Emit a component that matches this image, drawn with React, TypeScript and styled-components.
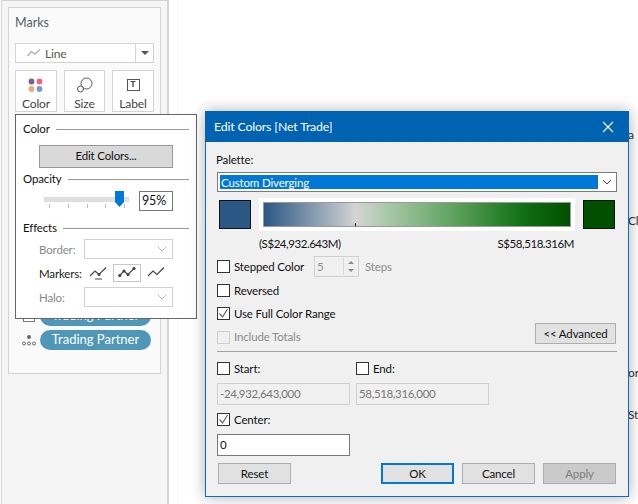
import React from "react";
import styled, { createGlobalStyle } from "styled-components";

const FONT = `"Lato", "Open Sans", "Liberation Sans", sans-serif`;

const Global = createGlobalStyle`
  html, body { margin: 0; padding: 0; background: #fff; }
  #root { width: 638px; height: 504px; }
  * { box-sizing: border-box; }
`;

const Page = styled.div`
  position: relative;
  width: 638px;
  height: 504px;
  overflow: hidden;
  display: flex;
  background: #fff;
  font-family: ${FONT};
  font-size: 11.5px;
  letter-spacing: -0.15px;
  color: #1a1a1a;
`;

const Sidebar = styled.aside`
  width: 169px;
  height: 504px;
  margin-left: 1px;
  padding: 7px 6px 0 6px;
  background: #f5f5f5;
  border-left: 1px solid #d4d4d4;
  border-right: 2px solid #d4d4d4;
  border-top: 1px solid #d4d4d4;
`;

const Worksheet = styled.main`
  flex: 1;
  margin-left: 8px;
  border-left: 1px solid #f4f4f4;
  display: flex;
  flex-direction: column;
  align-items: flex-start;
  padding: 127px 0 0 450px;
  font-size: 12px;
  color: #333;
  white-space: nowrap;
`;

const Stray = styled.span<{ $gap: number }>`
  display: block;
  height: 16px;
  line-height: 16px;
  margin-top: ${(p) => p.$gap}px;
`;

const MarksCard = styled.section`
  width: 153px;
  height: 367px;
  margin-top: -1px;
  padding: 7px 6px 0 6px;
  background: #fafafa;
  border: 1px solid #d4d4d4;
`;

const MarksTitle = styled.div`
  height: 16px;
  line-height: 16px;
  font-size: 12.5px;
  letter-spacing: 0;
  color: #55606e;
`;

const MarkType = styled.div`
  margin-top: 12px;
  height: 20px;
  width: 139px;
  display: flex;
  align-items: center;
  background: #fff;
  border: 1px solid #d4d4d4;
  color: #555;
  font-size: 12px;
`;

const MarkTypeLabel = styled.div`
  flex: 1;
  display: flex;
  align-items: center;
  gap: 4px;
  padding-left: 11px;
`;

const MarkTypeArrow = styled.div`
  width: 18px;
  height: 100%;
  border-left: 1px solid #d4d4d4;
  display: flex;
  align-items: center;
  justify-content: center;
  &::after {
    content: "";
    border-left: 4px solid transparent;
    border-right: 4px solid transparent;
    border-top: 4px solid #555;
  }
`;

const MarkButtons = styled.div`
  margin-top: 7px;
  display: flex;
  gap: 7px;
  width: 139px;
`;

const MarkButton = styled.div<{ $w: number }>`
  width: ${(p) => p.$w}px;
  height: 42px;
  background: #fff;
  border: 1px solid #d4d4d4;
  display: flex;
  flex-direction: column;
  align-items: center;
  color: #444;
  font-size: 12px;
`;

const MarkIconSlot = styled.div`
  height: 24px;
  display: flex;
  align-items: center;
  justify-content: center;
  margin-top: 2px;
`;

const MarkText = styled.div`
  line-height: 14px;
`;

const LabelGlyph = styled.span`
  width: 13px;
  height: 12px;
  border: 1px solid #555;
  display: flex;
  align-items: center;
  justify-content: center;
  font-family: "Liberation Mono", monospace;
  font-weight: 700;
  font-size: 9px;
  line-height: 1;
  color: #444;
`;

const PillList = styled.div`
  margin-top: 194px;
  display: flex;
  flex-direction: column;
  gap: 4px;
`;

const PillRow = styled.div`
  display: flex;
  align-items: center;
  gap: 4px;
`;

const PillIconSlot = styled.div`
  width: 14px;
  height: 14px;
  margin-left: 7px;
  display: flex;
  align-items: center;
  justify-content: center;
`;

const Pill = styled.div`
  width: 111px;
  height: 20px;
  border-radius: 10px;
  background: #4f97b6;
  color: #fff;
  font-size: 13px;
  letter-spacing: 0;
  line-height: 19px;
  text-align: center;
`;

/* Popover */
const Popover = styled.div`
  position: absolute;
  left: 15px;
  top: 114px;
  width: 182px;
  height: 205px;
  background: #fff;
  border: 1px solid #666;
  padding: 6px 7px 0 7px;
  color: #111;
`;

const GroupHead = styled.div`
  display: flex;
  align-items: center;
  gap: 6px;
  height: 16px;
  line-height: 16px;
  &::after {
    content: "";
    flex: 1;
    height: 1px;
    background: #999;
  }
`;

const EditColors = styled.div`
  width: 134px;
  height: 23px;
  margin: 8px 0 0 16px;
  background: #d9d9d9;
  border: 1px solid #999;
  text-align: center;
  line-height: 20px;
`;

const OpacityHead = styled(GroupHead)`
  margin-top: 3px;
`;

const OpacityRow = styled.div`
  position: relative;
  margin-top: 4px;
  height: 20px;
  display: flex;
  justify-content: flex-end;
  padding-right: 16px;
`;

const SliderTrack = styled.div`
  position: absolute;
  left: 21px;
  top: 6px;
  width: 85px;
  height: 5px;
  background: #e0e0e0;
  border: 1px solid #dcdcdc;
`;

const SliderTicks = styled.div`
  position: absolute;
  left: 26px;
  top: 13px;
  width: 76px;
  height: 4px;
  display: flex;
  justify-content: space-between;
  & > i {
    width: 1px;
    height: 4px;
    background: #bbb;
  }
`;

const SliderThumb = styled.svg`
  position: absolute;
  left: 92px;
  top: 0;
`;

const PercentBox = styled.div`
  width: 34px;
  height: 20px;
  border: 1px solid #777;
  padding-left: 2px;
  line-height: 18px;
  font-size: 12.5px;
`;

const EffectsHead = styled(GroupHead)`
  margin-top: 9px;
`;

const EffectRow = styled.div<{ $gap: number }>`
  display: flex;
  align-items: center;
  height: 20px;
  margin-top: ${(p) => p.$gap}px;
  padding-left: 16px;
`;

const EffectLabel = styled.div<{ $off?: boolean }>`
  width: 45px;
  color: ${(p) => (p.$off ? "#8a8a8a" : "#222")};
`;

const EffectSelect = styled.div`
  width: 89px;
  height: 20px;
  border: 1px solid #d0d0d0;
  display: flex;
  align-items: center;
  justify-content: flex-end;
  padding-right: 5px;
`;

const MarkerChoices = styled.div`
  display: flex;
  align-items: center;
  gap: 1px;
`;

const MarkerChoice = styled.div<{ $on?: boolean }>`
  width: 28px;
  height: 18px;
  border: 1px solid ${(p) => (p.$on ? "#c8c8c8" : "transparent")};
  display: flex;
  align-items: center;
  justify-content: center;
`;

/* Dialog */
const Dialog = styled.div`
  position: absolute;
  left: 205px;
  top: 111px;
  width: 424px;
  height: 386px;
  background: #f0f0f0;
  border: 1px solid #0a6cc0;
  border-top: 0;
  box-shadow: 0 0 14px rgba(0, 0, 0, 0.32);
  display: flex;
  flex-direction: column;
`;

const TitleBar = styled.div`
  height: 31px;
  margin: 0 -1px;
  padding: 0 15px 0 9px;
  background: #0063b1;
  color: #fff;
  font-size: 12.3px;
  display: flex;
  align-items: center;
  justify-content: space-between;
`;

const DialogBody = styled.div`
  flex: 1;
  padding: 11px 12px 0 10px;
  display: flex;
  flex-direction: column;
`;

const Row = styled.div<{ $h: number; $gap: number }>`
  height: ${(p) => p.$h}px;
  margin-top: ${(p) => p.$gap}px;
  display: flex;
  align-items: center;
`;

const Line = styled.div<{ $off?: boolean }>`
  line-height: 14px;
  white-space: nowrap;
  color: ${(p) => (p.$off ? "#8c8c8c" : "#111")};
`;

const StepLabel = styled(Line)`
  width: 80px;
`;

const Amount = styled(Line)`
  letter-spacing: -0.45px;
`;

const PaletteSelect = styled.div`
  width: 400px;
  height: 20px;
  margin-top: 5px;
  margin-left: 1px;
  padding: 2px 0 2px 2px;
  background: #fff;
  border: 1px solid #7a7a7a;
  display: flex;
  align-items: stretch;
`;

const PaletteValue = styled.div`
  width: 378px;
  padding-left: 1px;
  background: #0078d7;
  color: #fff;
  line-height: 15px;
`;

const PaletteCaret = styled.div`
  flex: 1;
  display: flex;
  align-items: center;
  justify-content: center;
`;

const GradientRow = styled.div`
  margin: 6px 0 0 3px;
  height: 33px;
  display: flex;
  align-items: center;
`;

const Swatch = styled.div<{ $c: string }>`
  width: 32px;
  height: 29px;
  background: ${(p) => p.$c};
  border: 1px solid #111;
`;

const GradientFrame = styled.div`
  width: 316px;
  height: 33px;
  margin: 0 8px;
  padding: 4px;
  background: #fff;
`;

const Gradient = styled.div`
  position: relative;
  height: 25px;
  border: 1px solid #999;
  background: linear-gradient(90deg, #2a5783 0%, #d4d4d4 30%, #a6c7a6 41%, #5ba05b 63%, #0f6f12 85%, #005000 100%);
`;

const GradientTick = styled.i`
  position: absolute;
  left: 91px;
  bottom: 0;
  width: 1px;
  height: 3px;
  background: #111;
`;

const RangeRow = styled.div`
  margin: 6px 0 0 43px;
  width: 315px;
  height: 14px;
  display: flex;
  justify-content: space-between;
`;

const Check = styled.div<{ $off?: boolean }>`
  flex: none;
  width: 13px;
  height: 13px;
  margin-left: 1px;
  margin-right: 4px;
  background: ${(p) => (p.$off ? "#f0f0f0" : "#fff")};
  border: 1px solid ${(p) => (p.$off ? "#cfcfcf" : "#333")};
  display: flex;
  align-items: center;
  justify-content: center;
`;

const Spinner = styled.div`
  margin-right: 6px;
  width: 45px;
  height: 21px;
  border: 1px solid #d0d0d0;
  padding: 1px 1px 1px 2px;
  display: flex;
  align-items: center;
  justify-content: space-between;
`;

const SpinnerArrows = styled.div`
  width: 14px;
  height: 17px;
  border-left: 1px solid #d8d8d8;
  display: flex;
  flex-direction: column;
  align-items: center;
  justify-content: space-around;
  background: #f0f0f0;
`;

const Arrow = styled.i<{ $down?: boolean }>`
  border-left: 3px solid transparent;
  border-right: 3px solid transparent;
  ${(p) => (p.$down ? "border-top: 3px solid #888;" : "border-bottom: 3px solid #888;")}
`;

const Spread = styled.div`
  height: 21px;
  margin-top: 3px;
  display: flex;
  align-items: flex-end;
  justify-content: space-between;
`;

const TotalsLine = styled.div`
  display: flex;
  align-items: center;
`;

const ActionButton = styled.div<{ $w?: number; $tone?: "primary" | "off" }>`
  width: ${(p) => p.$w ?? 73}px;
  height: 21px;
  text-align: center;
  line-height: ${(p) => (p.$tone === "primary" ? 17 : 19)}px;
  background: ${(p) => (p.$tone === "off" ? "#cacaca" : "#e1e1e1")};
  color: ${(p) => (p.$tone === "off" ? "#7c7c7c" : "#111")};
  border: ${(p) => (p.$tone === "primary" ? "2px solid #0078d7" : "1px solid #adadad")};
`;

const Divider = styled.div`
  height: 1px;
  margin-top: 7px;
  width: 400px;
  margin-left: 1px;
  background: #a0a0a0;
`;

const FieldPair = styled.div`
  display: flex;
  gap: 6px;
  margin: 8px 0 0 1px;
`;

const StartEnd = styled.div`
  display: flex;
  margin-top: 10px;
  height: 13px;
  align-items: center;
`;

const StartCell = styled.div`
  width: 139px;
  display: flex;
  align-items: center;
`;

const Field = styled.div<{ $off?: boolean }>`
  width: 133px;
  height: 22px;
  padding-left: 2px;
  line-height: 20px;
  letter-spacing: -0.35px;
  background: ${(p) => (p.$off ? "#f0f0f0" : "#fff")};
  color: ${(p) => (p.$off ? "#777" : "#111")};
  border: 1px solid ${(p) => (p.$off ? "#d0d0d0" : "#7a7a7a")};
`;

const Footer = styled.div`
  margin: 7px 0 0 2px;
  width: 398px;
  display: flex;
  gap: 8px;
`;

const FooterSpacer = styled.div`
  flex: 1;
`;

const Chevron = ({ c = "#bbb" }: { c?: string }) => (
  <svg width="10" height="6" viewBox="0 0 10 6">
    <path d="M1 1l4 4 4-4" fill="none" stroke={c} strokeWidth="1" />
  </svg>
);

const Tick = () => (
  <svg width="11" height="11" viewBox="0 0 11 11">
    <path d="M1.5 5.5l3 3.5 5-8" fill="none" stroke="#666" strokeWidth="1.2" />
  </svg>
);

const LineIcon = () => (
  <svg width="14" height="8" viewBox="0 0 14 8">
    <path d="M.5 7L4.5 2.5 8 5l5-4.5" fill="none" stroke="#aaa" strokeWidth="1.2" />
  </svg>
);

const MarkerIcon = ({ kind }: { kind: "select" | "all" | "none" }) => (
  <svg width="18" height="14" viewBox="0 0 18 14">
    <path d="M1 10L6 5l4 3.5L17 1.5" fill="none" stroke="#444" strokeWidth="1.2" />
    {kind === "select" && (
      <>
        <circle cx="10" cy="8.5" r="1.5" fill="#444" />
        <path d="M6 13h7" stroke="#444" strokeWidth="1" />
      </>
    )}
    {kind === "all" && (
      <>
        <circle cx="1.8" cy="9.5" r="1.6" fill="#444" />
        <circle cx="6" cy="5" r="1.6" fill="#444" />
        <circle cx="10" cy="8.5" r="1.6" fill="#444" />
        <circle cx="16" cy="2.5" r="1.6" fill="#444" />
      </>
    )}
  </svg>
);

export default function App() {
  return (
    <Page>
      <Global />
      <Sidebar>
        <MarksCard>
          <MarksTitle>Marks</MarksTitle>
          <MarkType>
            <MarkTypeLabel>
              <LineIcon />
              Line
            </MarkTypeLabel>
            <MarkTypeArrow />
          </MarkType>
          <MarkButtons>
            <MarkButton $w={42}>
              <MarkIconSlot>
                <svg width="16" height="15" viewBox="0 0 16 15">
                  <circle cx="3.5" cy="3.5" r="2.9" fill="#7b5f91" />
                  <circle cx="11.5" cy="3.5" r="2.9" fill="#ee6478" />
                  <circle cx="3.5" cy="11" r="2.9" fill="#eda77a" />
                  <circle cx="11.5" cy="11" r="2.9" fill="#6f9fc9" />
                </svg>
              </MarkIconSlot>
              <MarkText>Color</MarkText>
            </MarkButton>
            <MarkButton $w={41}>
              <MarkIconSlot>
                <svg width="16" height="16" viewBox="0 0 16 16">
                  <circle cx="9.5" cy="6.5" r="5.5" fill="none" stroke="#555" />
                  <circle cx="3.5" cy="12" r="3" fill="#fff" stroke="#555" />
                </svg>
              </MarkIconSlot>
              <MarkText>Size</MarkText>
            </MarkButton>
            <MarkButton $w={42}>
              <MarkIconSlot>
                <LabelGlyph>T</LabelGlyph>
              </MarkIconSlot>
              <MarkText>Label</MarkText>
            </MarkButton>
          </MarkButtons>
          <PillList>
            <PillRow>
              <PillIconSlot>
                <svg width="12" height="12" viewBox="0 0 12 12">
                  <rect x=".5" y=".5" width="11" height="11" fill="#fff" stroke="#777" />
                </svg>
              </PillIconSlot>
              <Pill>Trading Partner</Pill>
            </PillRow>
            <PillRow>
              <PillIconSlot>
                <svg width="14" height="12" viewBox="0 0 14 12">
                  <circle cx="7" cy="3" r="2" fill="#666" />
                  <circle cx="2" cy="9.5" r="1.5" fill="none" stroke="#666" />
                  <circle cx="7" cy="9.5" r="1.5" fill="none" stroke="#666" />
                  <circle cx="12" cy="9.5" r="1.5" fill="none" stroke="#666" />
                </svg>
              </PillIconSlot>
              <Pill>Trading Partner</Pill>
            </PillRow>
          </PillList>
        </MarksCard>
      </Sidebar>
      <Worksheet>
        <Stray $gap={0}>a</Stray>
        <Stray $gap={70}>Cl</Stray>
        <Stray $gap={136}>or</Stray>
        <Stray $gap={26}>St</Stray>
      </Worksheet>

      <Popover>
        <GroupHead>Color</GroupHead>
        <EditColors>Edit Colors...</EditColors>
        <OpacityHead>Opacity</OpacityHead>
        <OpacityRow>
          <SliderTrack />
          <SliderTicks>
            <i />
            <i />
            <i />
            <i />
            <i />
          </SliderTicks>
          <SliderThumb width="9" height="16" viewBox="0 0 9 16">
            <path d="M0 0h9v11l-4.5 5L0 11z" fill="#0078d7" />
          </SliderThumb>
          <PercentBox>95%</PercentBox>
        </OpacityRow>
        <EffectsHead>Effects</EffectsHead>
        <EffectRow $gap={3}>
          <EffectLabel $off>Border:</EffectLabel>
          <EffectSelect>
            <Chevron />
          </EffectSelect>
        </EffectRow>
        <EffectRow $gap={4}>
          <EffectLabel>Markers:</EffectLabel>
          <MarkerChoices>
            <MarkerChoice>
              <MarkerIcon kind="select" />
            </MarkerChoice>
            <MarkerChoice $on>
              <MarkerIcon kind="all" />
            </MarkerChoice>
            <MarkerChoice>
              <MarkerIcon kind="none" />
            </MarkerChoice>
          </MarkerChoices>
        </EffectRow>
        <EffectRow $gap={4}>
          <EffectLabel $off>Halo:</EffectLabel>
          <EffectSelect>
            <Chevron />
          </EffectSelect>
        </EffectRow>
      </Popover>

      <Dialog>
        <TitleBar>
          Edit Colors [Net Trade]
          <svg width="12" height="12" viewBox="0 0 12 12">
            <path d="M1 1l10 10M11 1L1 11" stroke="#fff" strokeWidth="1.1" fill="none" />
          </svg>
        </TitleBar>
        <DialogBody>
          <Line>Palette:</Line>
          <PaletteSelect>
            <PaletteValue>Custom Diverging</PaletteValue>
            <PaletteCaret>
              <Chevron c="#444" />
            </PaletteCaret>
          </PaletteSelect>
          <GradientRow>
            <Swatch $c="#2a5783" />
            <GradientFrame>
              <Gradient>
                <GradientTick />
              </Gradient>
            </GradientFrame>
            <Swatch $c="#005000" />
          </GradientRow>
          <RangeRow>
            <Amount>(S$24,932.643M)</Amount>
            <Amount>S$58,518.316M</Amount>
          </RangeRow>
          <Row $h={21} $gap={5}>
            <Check />
            <StepLabel>Stepped Color</StepLabel>
            <Spinner>
              <Line $off>5</Line>
              <SpinnerArrows>
                <Arrow />
                <Arrow $down />
              </SpinnerArrows>
            </Spinner>
            <Line $off>Steps</Line>
          </Row>
          <Row $h={13} $gap={7}>
            <Check />
            <Line>Reversed</Line>
          </Row>
          <Row $h={13} $gap={10}>
            <Check>
              <Tick />
            </Check>
            <Line>Use Full Color Range</Line>
          </Row>
          <Spread>
            <TotalsLine>
              <Check $off />
              <Line $off>Include Totals</Line>
            </TotalsLine>
            <ActionButton $w={81}>&lt;&lt; Advanced</ActionButton>
          </Spread>
          <Divider />
          <StartEnd>
            <StartCell>
              <Check />
              <Line>Start:</Line>
            </StartCell>
            <StartCell>
              <Check />
              <Line>End:</Line>
            </StartCell>
          </StartEnd>
          <FieldPair>
            <Field $off>-24,932,643,000</Field>
            <Field $off>58,518,316,000</Field>
          </FieldPair>
          <Row $h={13} $gap={8}>
            <Check>
              <Tick />
            </Check>
            <Line>Center:</Line>
          </Row>
          <FieldPair>
            <Field>0</Field>
          </FieldPair>
          <Footer>
            <ActionButton>Reset</ActionButton>
            <FooterSpacer />
            <ActionButton $tone="primary">OK</ActionButton>
            <ActionButton>Cancel</ActionButton>
            <ActionButton $tone="off">Apply</ActionButton>
          </Footer>
        </DialogBody>
      </Dialog>
    </Page>
  );
}
